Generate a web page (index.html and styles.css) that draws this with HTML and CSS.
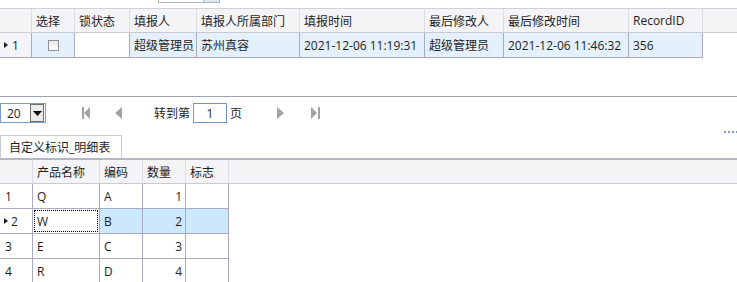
FILE: index.html
```
<!DOCTYPE html>
<html>
<head>
<meta charset="utf-8">
<link rel="stylesheet" href="styles.css">
</head>
<body>
<div class="top-panel">
  <div class="top-strip"><div class="stub"><span class="stub-a"></span><span class="stub-b"></span></div></div>
  <div class="grid grid-top">
    <div class="hc rh"></div>
    <div class="hc">选择</div>
    <div class="hc">锁状态</div>
    <div class="hc">填报人</div>
    <div class="hc">填报人所属部门</div>
    <div class="hc">填报时间</div>
    <div class="hc">最后修改人</div>
    <div class="hc">最后修改时间</div>
    <div class="hc">RecordID</div>
    <div class="hc last"></div>

    <div class="c rowhead gray"><span class="ind"></span>1</div>
    <div class="c sel center"><span class="chk"></span></div>
    <div class="c"></div>
    <div class="c sel">超级管理员</div>
    <div class="c sel">苏州真容</div>
    <div class="c sel">2021-12-06 11:19:31</div>
    <div class="c sel">超级管理员</div>
    <div class="c sel">2021-12-06 11:46:32</div>
    <div class="c sel">356</div>
    <div class="empty"></div>
  </div>
</div>

<div class="pager">
  <div class="pagesize"><span class="ps-val">20</span><span class="ps-btn"><svg width="9" height="5" viewBox="0 0 9 5"><path d="M0 0H9L4.5 5Z" fill="#000"/></svg></span></div>
  <svg class="nav nav-first" width="8" height="12" viewBox="0 0 8 12"><rect x="0" y="0" width="2" height="12" fill="#a2a2a2"/><path d="M8 0V12L2 6Z" fill="#a2a2a2"/></svg>
  <svg class="nav nav-prev" width="7" height="12" viewBox="0 0 7 12"><path d="M7 0V12L0 6Z" fill="#a2a2a2"/></svg>
  <span class="goto">转到第</span>
  <span class="pageinput">1</span>
  <span class="page">页</span>
  <svg class="nav nav-next" width="7" height="12" viewBox="0 0 7 12"><path d="M0 0V12L7 6Z" fill="#a2a2a2"/></svg>
  <svg class="nav nav-last" width="9" height="12" viewBox="0 0 9 12"><path d="M0 0V12L6 6Z" fill="#a2a2a2"/><rect x="7" y="0" width="2" height="12" fill="#a2a2a2"/></svg>
</div>

<div class="dots-row"><span class="dots"></span></div>

<div class="tabbar"><div class="tab">自定义标识_明细表</div></div>

<div class="grid grid-bottom">
  <div class="hc rh"></div>
  <div class="hc">产品名称</div>
  <div class="hc">编码</div>
  <div class="hc">数量</div>
  <div class="hc">标志</div>
  <div class="hc last"></div>

  <div class="c rowhead">1</div>
  <div class="c">Q</div>
  <div class="c">A</div>
  <div class="c num">1</div>
  <div class="c"></div>
  <div class="empty"></div>

  <div class="c rowhead"><span class="ind"></span>2</div>
  <div class="c focus"><span class="focus-box">W</span></div>
  <div class="c sel2">B</div>
  <div class="c sel2 num">2</div>
  <div class="c sel2"></div>
  <div class="empty"></div>

  <div class="c rowhead">3</div>
  <div class="c">E</div>
  <div class="c">C</div>
  <div class="c num">3</div>
  <div class="c"></div>
  <div class="empty"></div>

  <div class="c rowhead">4</div>
  <div class="c">R</div>
  <div class="c">D</div>
  <div class="c num">4</div>
  <div class="c"></div>
  <div class="empty"></div>
</div>
</body>
</html>
```

FILE: styles.css
```
html, body {
  margin: 0;
  padding: 0;
  background: #ffffff;
  overflow: hidden;
}
body {
  width: 737px;
  height: 282px;
  font-family: "Open Sans", "Noto Sans CJK SC", sans-serif;
  font-size: 12px;
  color: #1e1e1e;
}

.top-panel {
  height: 96px;
}
.top-strip {
  height: 8px;
}
.stub {
  display: flex;
  margin-left: 158px;
  height: 3px;
}
.stub-a {
  width: 44px;
  height: 2px;
  border: 1px solid #a9b3c2;
  border-top: none;
  background: #ffffff;
}
.stub-b {
  width: 15px;
  height: 2px;
  border: 1px solid #a9b3c2;
  border-top: none;
  border-left: none;
  background: #dbe6f3;
}

.grid {
  display: grid;
}
.grid-top {
  grid-template-columns: 32px 43px 55px 67px 103px 125px 79px 125px 74px 1fr;
  grid-template-rows: 24px 25px;
  border-top: 1px solid #cfd0d8;
}
.grid-bottom {
  grid-template-columns: 33px 67px 43px 43px 43px 1fr;
  grid-template-rows: 24px 25px 25px 25px 25px;
}

.hc {
  background: #f4f4f6;
  border-right: 1px solid #dcdce2;
  border-bottom: 1px solid #c9cad2;
  display: flex;
  align-items: center;
  padding-left: 4px;
  white-space: nowrap;
  overflow: hidden;
}
.hc.last {
  border-right: none;
}

.c {
  border-right: 1px solid #a9aac0;
  border-bottom: 1px solid #a9aac0;
  display: flex;
  align-items: center;
  padding-left: 4px;
  white-space: nowrap;
  overflow: hidden;
  background: #ffffff;
}
.c.gray {
  background: #f4f4f6;
}
.c.sel {
  background: #e4f0fb;
}
.c.sel2 {
  background: #cce8ff;
}
.c.center {
  justify-content: center;
  padding-left: 0;
}
.c.num {
  justify-content: flex-end;
  padding-left: 0;
  padding-right: 3px;
}
.rowhead {
  padding-left: 4px;
}
.grid-bottom .rowhead {
  padding-left: 5px;
}
.ind {
  width: 0;
  height: 0;
  border-top: 3.5px solid transparent;
  border-bottom: 3.5px solid transparent;
  border-left: 4px solid #1e1e1e;
  margin-right: 4px;
}
.grid-bottom .rowhead .ind {
  margin-left: -1px;
  margin-right: 3px;
}
.empty {
  background: #ffffff;
}

.chk {
  width: 9px;
  height: 9px;
  border: 1px solid #8f8f8f;
  background: linear-gradient(#e6e6e6, #ffffff);
  margin-left: 1px;
}

.c.focus {
  padding: 1px;
}
.focus-box {
  flex: 1;
  align-self: stretch;
  border: 1px dotted #000000;
  display: flex;
  align-items: center;
  padding-left: 2px;
}

.pager {
  border-top: 1px solid #9ea2ae;
  padding-top: 6px;
  height: 20px;
  display: flex;
  align-items: center;
}
.pagesize {
  width: 44px;
  height: 18px;
  border: 1px solid #7a9cc8;
  display: flex;
  align-items: center;
}
.ps-val {
  flex: 1;
  padding-left: 6px;
}
.ps-btn {
  width: 12px;
  height: 16px;
  border: 1px solid #707070;
  background: #ebebeb;
  margin-right: 1px;
  display: flex;
  align-items: center;
  justify-content: center;
}
.nav {
  display: block;
}
.nav-first {
  margin-left: 36px;
}
.nav-prev {
  margin-left: 25px;
}
.goto {
  margin-left: 32px;
}
.pageinput {
  width: 32px;
  height: 18px;
  border: 1px solid #6f93c2;
  margin-left: 3px;
  display: flex;
  align-items: center;
  justify-content: center;
}
.page {
  margin-left: 3px;
}
.nav-next {
  margin-left: 35px;
}
.nav-last {
  margin-left: 27px;
}

.dots-row {
  display: flex;
  justify-content: flex-end;
  margin-top: 8px;
  height: 2px;
}
.dots {
  width: 13px;
  height: 2px;
  background: repeating-linear-gradient(90deg, #7d9bc6 0 2px, transparent 2px 4px);
}

.tabbar {
  margin-top: 2px;
  border-bottom: 2px solid #b4b7c2;
  display: flex;
}
.tab {
  width: 112px;
  height: 22px;
  border: 1px solid #c8cad2;
  border-bottom: none;
  padding-left: 8px;
  display: flex;
  align-items: center;
  background: #ffffff;
}
```
